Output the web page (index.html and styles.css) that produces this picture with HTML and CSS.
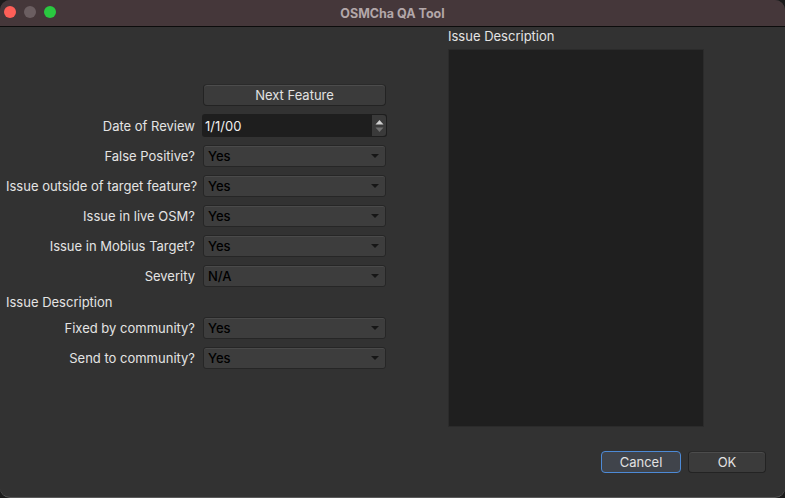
FILE: index.html
```html
<!DOCTYPE html>
<html>
<head>
<meta charset="utf-8">
<link rel="stylesheet" href="styles.css">
</head>
<body>
<div class="window">
  <div class="titlebar">
    <div class="lights">
      <span class="light red"></span>
      <span class="light grey"></span>
      <span class="light green"></span>
    </div>
    <div class="title">OSMCha QA Tool</div>
  </div>
  <div class="content">
    <div class="main">
      <div class="form">
        <div class="label"></div>
        <button class="btn next">Next Feature</button>

        <div class="label">Date of Review</div>
        <div class="datefield">
          <span class="dateval">1/1/00</span>
          <span class="stepper">
            <svg width="9" height="14" viewBox="0 0 9 14"><path d="M0.5 5.5 L4.5 1 L8.5 5.5 Z" fill="#d0d0d0"/><path d="M0.5 8.5 L4.5 13 L8.5 8.5 Z" fill="#6e6e6e"/></svg>
          </span>
        </div>

        <div class="label">False Positive?</div>
        <div class="combo"><span>Yes</span><i class="arrow"></i></div>

        <div class="label">Issue outside of target feature?</div>
        <div class="combo"><span>Yes</span><i class="arrow"></i></div>

        <div class="label">Issue in live OSM?</div>
        <div class="combo"><span>Yes</span><i class="arrow"></i></div>

        <div class="label">Issue in Mobius Target?</div>
        <div class="combo"><span>Yes</span><i class="arrow"></i></div>

        <div class="label">Severity</div>
        <div class="combo"><span>N/A</span><i class="arrow"></i></div>

        <div class="section">Issue Description</div>

        <div class="label">Fixed by community?</div>
        <div class="combo"><span>Yes</span><i class="arrow"></i></div>

        <div class="label">Send to community?</div>
        <div class="combo"><span>Yes</span><i class="arrow"></i></div>
      </div>
      <div class="side">
        <div class="side-label">Issue Description</div>
        <div class="textbox"></div>
      </div>
    </div>
    <div class="footer">
      <button class="btn cancel">Cancel</button>
      <button class="btn ok">OK</button>
    </div>
  </div>
</div>
</body>
</html>
```

FILE: styles.css
```css
html, body {
  margin: 0;
  padding: 0;
  background: #1b1b1b;
}
body {
  width: 785px;
  height: 498px;
  overflow: hidden;
  font-family: Inter, "Noto Sans", sans-serif;
  font-size: 13px;
  color: #e4e4e4;
}
.window {
  width: 785px;
  height: 497px;
  background: #323232;
  border-radius: 10px;
  border-bottom: 1px solid #5a5a5a;
  overflow: hidden;
  display: flex;
  flex-direction: column;
}
.titlebar {
  height: 26px;
  background: #45373a;
  border-bottom: 1px solid #0c0c0c;
  position: relative;
  display: flex;
  align-items: center;
  justify-content: center;
  flex: none;
}
.lights {
  position: absolute;
  left: 4px;
  top: 6px;
  display: flex;
  gap: 8px;
}
.light {
  width: 12px;
  height: 12px;
  border-radius: 50%;
  display: block;
}
.red { background: #fe5f58; }
.grey { background: #6b5e61; }
.green { background: #2ac840; }
.title {
  font-weight: 700;
  font-size: 12.5px;
  color: #b3a7a9;
}
.content {
  flex: 1;
  display: flex;
  flex-direction: column;
}
.main {
  display: flex;
}
.form {
  width: 442px;
  padding: 57px 0 0 6px;
  display: grid;
  grid-template-columns: 189px 184px;
  column-gap: 8px;
  row-gap: 8px;
  align-items: center;
  align-content: start;
}
.label {
  text-align: right;
  white-space: nowrap;
  line-height: 22px;
}
.section {
  grid-column: 1 / 3;
  line-height: 14px;
  height: 14px;
}
.btn {
  font-family: inherit;
  font-size: 13px;
  color: #e2e2e2;
  background: #3b3b3b;
  border: 1px solid #232323;
  border-top-color: #2a2a2a;
  box-shadow: inset 0 1px 0 #4c4c4c;
  border-radius: 4px;
  height: 22px;
  padding: 0;
  margin: 0;
}
.next {
  width: 183px;
}
.datefield {
  height: 23px;
  background: #1e1e1e;
  border-radius: 3px;
  display: flex;
  align-items: center;
  justify-content: space-between;
  width: 185px;
  margin-left: -1px;
}
.dateval {
  padding-left: 3px;
  color: #f0f0f0;
}
.stepper {
  width: 14px;
  height: 21px;
  margin-right: 1px;
  background: #3a3a3a;
  border-radius: 0 3px 3px 0;
  display: flex;
  align-items: center;
  justify-content: center;
}
.combo {
  height: 20px;
  width: 181px;
  background: #3d3d3d;
  border: 1px solid #262626;
  box-shadow: inset 0 1px 0 #4a4a4a;
  border-radius: 3px;
  display: flex;
  align-items: center;
  justify-content: space-between;
  color: #000;
  font-weight: 500;
}
.combo span {
  padding-left: 4px;
}
.arrow {
  width: 0;
  height: 0;
  border-left: 4px solid transparent;
  border-right: 4px solid transparent;
  border-top: 4px solid #161616;
  margin-right: 6px;
}
.side {
  padding-top: 1px;
  display: flex;
  flex-direction: column;
}
.side-label {
  line-height: 16px;
  height: 16px;
}
.textbox {
  margin-top: 5px;
  width: 254px;
  height: 376px;
  background: #1f1f1f;
  border: 1px solid #2b2b2b;
}
.footer {
  display: flex;
  justify-content: flex-end;
  gap: 7px;
  padding-right: 19px;
  margin-top: 24px;
}
.cancel {
  width: 80px;
  background: #40444b;
  border: 1px solid #4d8ad6;
  box-shadow: none;
}
.ok {
  width: 78px;
}
```
